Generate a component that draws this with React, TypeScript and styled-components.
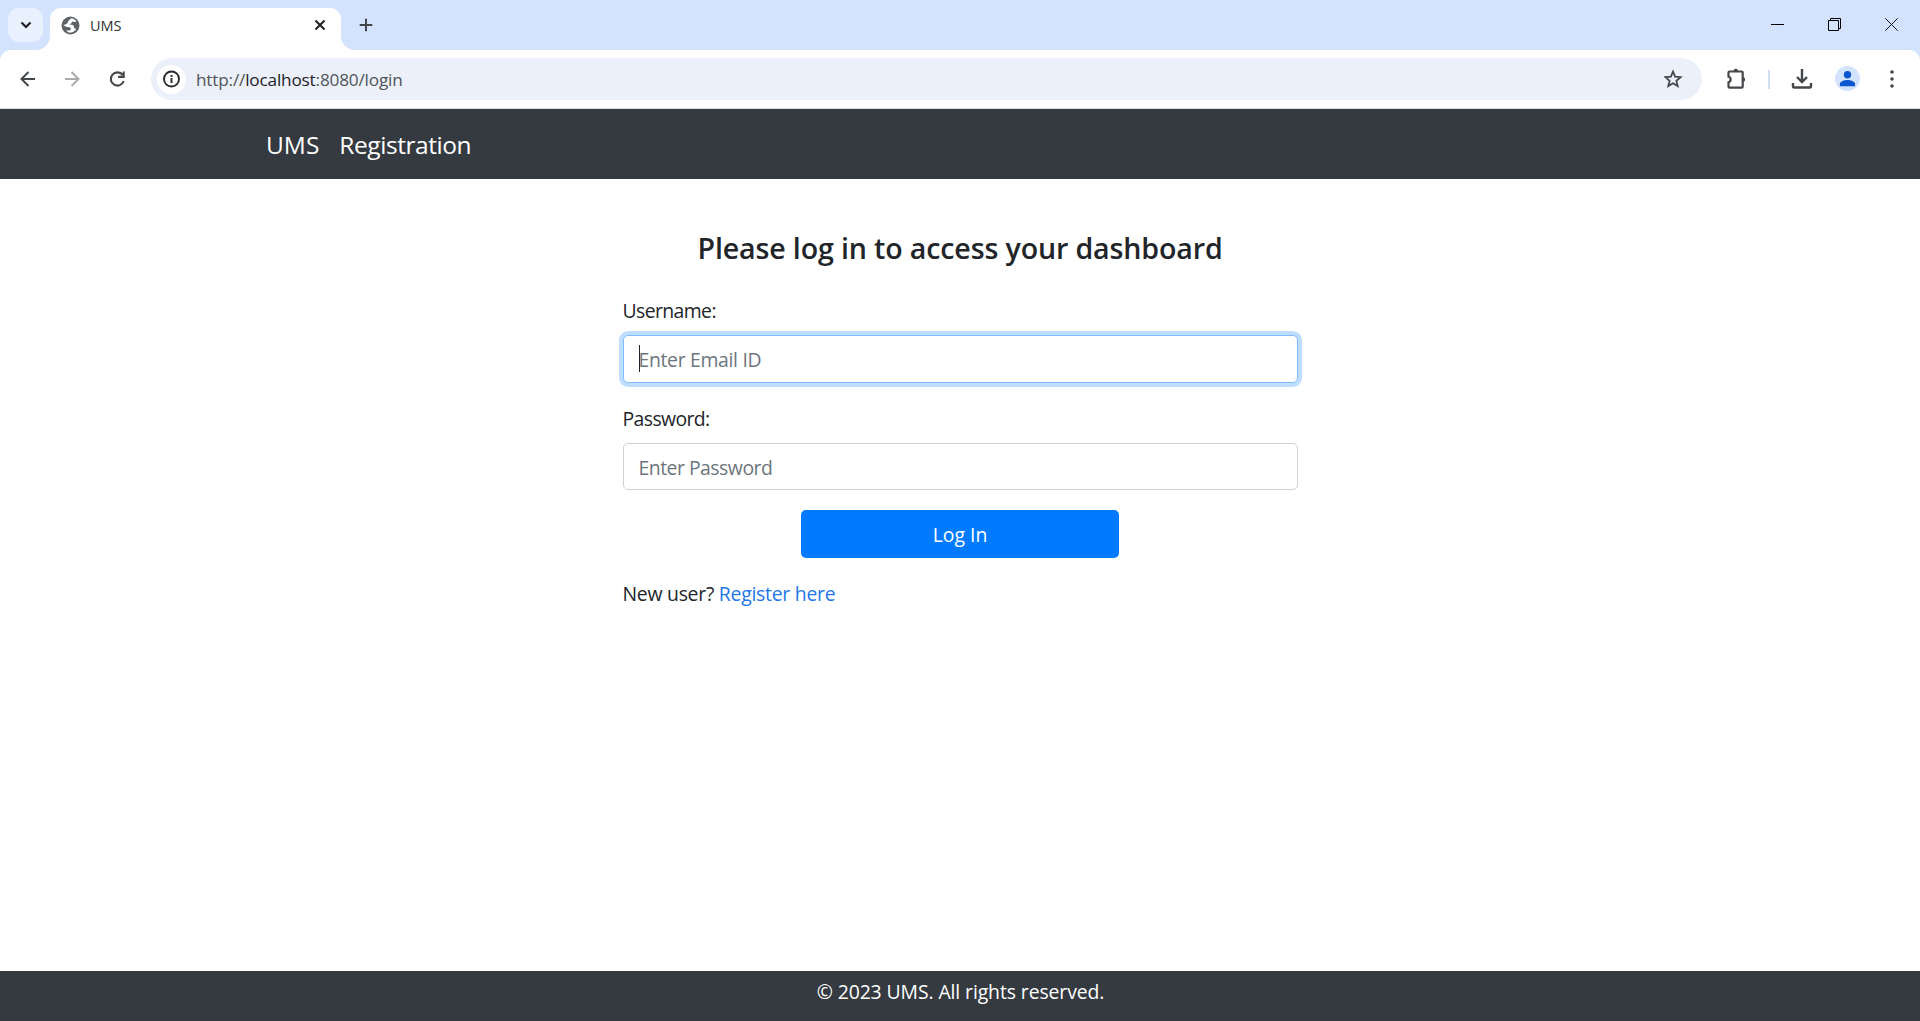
import React from "react";
import styled, { createGlobalStyle, css } from "styled-components";

const GlobalStyle = createGlobalStyle`
  *, *::before, *::after { box-sizing: border-box; }
  body {
    margin: 0;
    background: #fff;
    color: #212529;
    font-family: "Open Sans", "Noto Sans", sans-serif;
    font-size: 19.4px;
    line-height: 30px;
    overflow: hidden;
  }
`;

const Window = styled.div`
  display: flex;
  flex-direction: column;
  height: 1021px;
`;

/* ---------- browser chrome ---------- */

const TabStrip = styled.div`
  display: flex;
  align-items: flex-start;
  height: 50px;
  padding: 8px 0 0 8px;
  background: #d3e2fd;
`;

const TabSearch = styled.div`
  display: grid;
  place-items: center;
  width: 35px;
  height: 34px;
  border-radius: 11px;
  background: #e9f0fe;
`;

const flare = css`
  content: "";
  position: absolute;
  bottom: 0;
  width: 14px;
  height: 14px;
`;

const Tab = styled.div`
  position: relative;
  display: flex;
  align-items: center;
  width: 291px;
  height: 42px;
  margin-left: 7px;
  padding: 0 15px 8px 11px;
  border-radius: 11px 11px 0 0;
  background: #fff;
  &::before {
    ${flare}
    left: -14px;
    background: radial-gradient(circle at 0 0, transparent 13.5px, #fff 14.5px);
  }
  &::after {
    ${flare}
    right: -14px;
    background: radial-gradient(circle at 100% 0, transparent 13.5px, #fff 14.5px);
  }
`;

const TabTitle = styled.span`
  flex: 1;
  margin-left: 10px;
  padding-top: 1px;
  color: #303236;
  font-size: 14.5px;
  font-weight: 400;
  line-height: 20px;
  letter-spacing: 0;
`;

const NewTab = styled.div`
  display: grid;
  place-items: center;
  width: 35px;
  height: 34px;
  margin-left: 7px;
`;

const WindowControls = styled.div`
  display: flex;
  gap: 44px;
  margin: 10px 22px 0 auto;
`;

const ToolbarBack = styled.div`
  background: #d3e2fd;
`;

const Toolbar = styled.div`
  display: flex;
  align-items: center;
  height: 59px;
  padding: 0 16px 0 17px;
  border-bottom: 1px solid #d5dce4;
  border-radius: 11px 11px 0 0;
  background: #fff;
`;

const NavButtons = styled.div`
  display: flex;
  gap: 24px;
  width: 134px;
`;

const AddressBar = styled.div`
  display: flex;
  align-items: center;
  width: 1551px;
  height: 42px;
  padding: 0 18px 0 6px;
  border-radius: 21px;
  background: #ebf0fa;
`;

const SiteInfo = styled.div`
  display: grid;
  place-items: center;
  width: 29px;
  height: 29px;
  border-radius: 50%;
  background: #fff;
`;

const Url = styled.span`
  flex: 1;
  margin-left: 10px;
  padding-top: 1px;
  color: #505459;
  font-size: 17.2px;
  font-weight: 400;
  line-height: 24px;
  letter-spacing: -0.18px;
`;

const Host = styled.span`
  color: #1f2125;
`;

const Tools = styled.div`
  display: flex;
  align-items: center;
  margin-left: 22px;
`;

const Separator = styled.div`
  width: 2px;
  height: 19px;
  margin: 0 21px 0 20px;
  background: #cfdff6;
`;

const Avatar = styled.div`
  display: grid;
  place-items: center;
  width: 25px;
  height: 25px;
  margin: 0 21px 2px 22px;
  border-radius: 50%;
  background: #d3e2fd;
`;

const Icon = styled.svg<{ $color?: string }>`
  display: block;
  flex: none;
  color: ${(p) => p.$color ?? "#44474a"};
  fill: none;
  stroke: currentColor;
`;

/* ---------- page ---------- */

const Navbar = styled.nav`
  display: flex;
  align-items: center;
  gap: 20px;
  height: 70px;
  padding: 2px 266px 0;
  background: #343a40;
`;

const NavLink = styled.a<{ $spacing: number }>`
  color: #fff;
  font-size: 24.5px;
  line-height: 38px;
  letter-spacing: ${(p) => p.$spacing}px;
`;

const Main = styled.main`
  flex: 1;
  width: 675px;
  margin: 0 622px 0 623px;
  padding-top: 50px;
`;

const Title = styled.h3`
  margin: 0;
  padding-right: 1px;
  font-size: 28.6px;
  font-weight: 570;
  line-height: 38px;
  letter-spacing: -0.15px;
  text-align: center;
  white-space: nowrap;
`;

const Field = styled.div`
  margin-bottom: 20px;
`;

const Form = styled.form`
  margin-top: 29px;
`;

const Label = styled.label`
  display: block;
  margin: 0 0 9px -0.5px;
  line-height: 30px;
  letter-spacing: -0.6px;
`;

const Input = styled.div<{ $focused?: boolean }>`
  display: flex;
  align-items: center;
  height: ${(p) => (p.$focused ? 48 : 47)}px;
  margin-bottom: ${(p) => (p.$focused ? 21 : 20)}px;
  padding: 2px 15px 0;
  border: 1px solid ${(p) => (p.$focused ? "#80bdff" : "#ced0d3")};
  border-radius: 5px;
  background: #fff;
  box-shadow: ${(p) => (p.$focused ? "0 0 0 4px #bfdeff" : "none")};
`;

const Caret = styled.span`
  width: 1px;
  height: 27px;
  margin: -3px -1px 0 0;
  background: #212529;
`;

const Placeholder = styled.span<{ $spacing: number }>`
  margin-left: -0.5px;
  color: #6c757d;
  letter-spacing: ${(p) => p.$spacing}px;
`;

const Submit = styled.button`
  display: block;
  width: 318px;
  height: 48px;
  margin: 0 0 0 178px;
  padding: 2px 0 0;
  border: 0;
  border-radius: 5px;
  background: #007bff;
  color: #fff;
  font: inherit;
  letter-spacing: 0;
`;

const Prompt = styled.p`
  margin: 21px 0 0 -0.5px;
  letter-spacing: -0.26px;
`;

const Link = styled.a`
  color: #2277e8;
`;

const Footer = styled.footer`
  height: 50px;
  padding: 6px 0 0 1px;
  background: #343a40;
  color: #fff;
  letter-spacing: -0.1px;
  text-align: center;
`;

const Chrome = () => (
  <>
    <TabStrip>
      <TabSearch>
        <Icon width="12" height="8" viewBox="0 0 12 8" strokeWidth="2.2" $color="#1f2023">
          <path d="M1.500 1.500 6 6l4.500-4.500" />
        </Icon>
      </TabSearch>
      <Tab>
        <Icon width="19" height="19" viewBox="0 0 19 19" $color="#5f6368">
          <circle cx="9.500" cy="9.500" r="9" fill="currentColor" stroke="none" />
          <path
            d="M10.200 2.200C12.600 2.400 14.300 3.400 15.500 5.200L13.300 5.900 11.300 5.500 10.300 7.200 8.200 8.500 11.300 8.700 13 10.300 12.900 12 15.300 12.900C13.600 15.600 10.500 17 7.400 16.400L5.300 14.600 8.800 14.500 10.100 12.800 8.800 11.200 5.800 10.900 2.500 9.200 6.300 7.500 7.300 5z"
            fill="#fff"
            stroke="none"
          />
        </Icon>
        <TabTitle>UMS</TabTitle>
        <Icon width="12" height="12" viewBox="0 0 12 12" strokeWidth="2" $color="#1f2023">
          <path d="m1.500 1.500 9 9m0-9-9 9" />
        </Icon>
      </Tab>
      <NewTab>
        <Icon width="14" height="14" viewBox="0 0 14 14" strokeWidth="2">
          <path d="M7 .7v12.600M.7 7h12.600" />
        </Icon>
      </NewTab>
      <WindowControls>
        <Icon width="13" height="13" viewBox="0 0 13 13" $color="#000">
          <path d="M0 6.500h13" />
        </Icon>
        <Icon width="13" height="13" viewBox="0 0 13 13" $color="#000">
          <path d="M.5 2.500h10v10H.5zM2.500 2.500v-2h10v10h-2" />
        </Icon>
        <Icon width="13" height="13" viewBox="0 0 13 13" $color="#111">
          <path d="m.3.300 12.400 12.400m0-12.400L.3 12.700" />
        </Icon>
      </WindowControls>
    </TabStrip>
    <ToolbarBack>
      <Toolbar>
        <NavButtons>
          <Icon width="21" height="20" viewBox="0 0 21 20" strokeWidth="2">
            <path d="M18 10H4.500m7-7-7 7 7 7" />
          </Icon>
          <Icon width="21" height="20" viewBox="0 0 21 20" strokeWidth="2" $color="#a9abad">
            <path d="M3 10h13.500m-7-7 7 7-7 7" />
          </Icon>
          <Icon width="21" height="20" viewBox="0 0 21 20" strokeWidth="2.100">
            <path d="M15.700 6A6.600 6.600 0 1 0 16.700 12M16.700 2.600v5.300h-5.600" />
          </Icon>
        </NavButtons>
        <AddressBar>
          <SiteInfo>
            <Icon width="18" height="18" viewBox="0 0 18 18" strokeWidth="1.900" $color="#27292c">
              <circle cx="8.500" cy="9" r="7.500" />
              <path d="M8.500 8v5M8.500 5v1.900" />
            </Icon>
          </SiteInfo>
          <Url>
            http://<Host>localhost</Host>:8080/login
          </Url>
          <Icon width="20" height="20" viewBox="0 0 20 20" strokeWidth="1.800">
            <path d="m9 2.500 2.100 5.100 5.500.5-4.200 3.600 1.300 5.400-4.700-2.900-4.700 2.900 1.300-5.400L1.400 8.100l5.500-.5z" />
          </Icon>
        </AddressBar>
        <Tools>
          <Icon width="24" height="24" viewBox="0 0 24 24" strokeWidth="2.200">
            <path d="M5.500 4.500h12.200a1 1 0 0 1 1 1v14.200a1 1 0 0 1-1 1H5.500a1 1 0 0 1-1-1v-4.400a2.900 2.900 0 0 0 0-5.600V5.500a1 1 0 0 1 1-1z" />
            <path d="M9.600 4a2.200 2.200 0 0 1 4.400 0zM19 10.300a2.200 2.200 0 0 1 0 4.400z" fill="currentColor" stroke="none" />
          </Icon>
          <Separator />
          <Icon width="22" height="22" viewBox="0 0 22 22" strokeWidth="2.400">
            <path d="M11 1v12.500M6 9l5 5 5-5M2 15v3.200c0 .8.600 1.300 1.300 1.300h15.400c.7 0 1.300-.5 1.300-1.300V15" />
          </Icon>
          <Avatar>
            <Icon width="17" height="17" viewBox="0 0 17 17" $color="#0b57d0">
              <path
                d="M8.500 8.500a3.700 3.700 0 1 0 0-7.400 3.700 3.700 0 0 0 0 7.400zM.9 16.200v-2.300c0-2.500 4.600-4 7.600-4s7.600 1.500 7.600 4v2.300z"
                fill="currentColor"
                stroke="none"
              />
            </Icon>
          </Avatar>
          <Icon width="22" height="22" viewBox="0 0 22 22">
            <g fill="currentColor" stroke="none">
              <circle cx="11" cy="4" r="1.800" />
              <circle cx="11" cy="11" r="1.800" />
              <circle cx="11" cy="18" r="1.800" />
            </g>
          </Icon>
        </Tools>
      </Toolbar>
    </ToolbarBack>
  </>
);

export default function App() {
  return (
    <Window>
      <GlobalStyle />
      <Chrome />
      <Navbar>
        <NavLink $spacing={0}>UMS</NavLink>
        <NavLink $spacing={-0.45}>Registration</NavLink>
      </Navbar>
      <Main>
        <Title>Please log in to access your dashboard</Title>
        <Form>
          <Field>
            <Label>Username:</Label>
            <Input $focused>
              <Caret />
              <Placeholder $spacing={-0.32}>Enter Email ID</Placeholder>
            </Input>
          </Field>
          <Field>
            <Label>Password:</Label>
            <Input>
              <Placeholder $spacing={-0.5}>Enter Password</Placeholder>
            </Input>
          </Field>
          <Submit type="button">Log In</Submit>
        </Form>
        <Prompt>
          New user? <Link>Register here</Link>
        </Prompt>
      </Main>
      <Footer>© 2023 UMS. All rights reserved.</Footer>
    </Window>
  );
}
